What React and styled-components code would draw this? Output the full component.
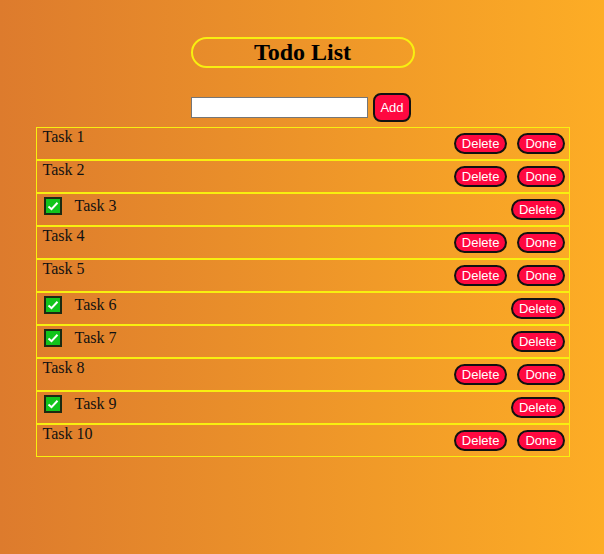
import React, { useState } from "react";
import styled, { createGlobalStyle } from "styled-components";

const GlobalStyle = createGlobalStyle`
  html, body {
    margin: 0;
    padding: 0;
  }
  body {
    min-height: 100vh;
    background: linear-gradient(to right, #dd7b2d, #fdad25);
    font-family: "Liberation Serif", "Times New Roman", serif;
  }
`;

const Page = styled.div`
  display: flex;
  flex-direction: column;
  align-items: center;
  padding-top: 37px;
  min-height: 100vh;
  box-sizing: border-box;
`;

const Title = styled.h1`
  margin: 0 0 25px 1px;
  width: 224px;
  box-sizing: border-box;
  border: 2px solid #f8ef10;
  border-radius: 16px;
  font-size: 24px;
  line-height: 27px;
  text-align: center;
  color: #000;
`;

const Form = styled.form`
  display: flex;
  align-items: center;
  gap: 5px;
  margin-bottom: 5px;
  margin-right: 2px;
`;

const Input = styled.input`
  width: 177px;
  height: 21px;
  box-sizing: border-box;
  border: 1px solid #767676;
  background: #fff;
  padding: 1px 2px;
`;

const RedButton = styled.button`
  background: #ff0840;
  color: #fff;
  border: 2px solid #111;
  font-family: "Liberation Sans", Arial, sans-serif;
  font-size: 13px;
  line-height: 15px;
  cursor: pointer;
  padding: ${(p) => (p.$big ? "5px 5px" : "1px 6px")};
  border-radius: ${(p) => (p.$big ? "8px" : "12px")};
`;

const List = styled.ul`
  list-style: none;
  margin: 0 0 0 1px;
  padding: 0;
  width: 534px;
`;

const Row = styled.li`
  display: flex;
  align-items: center;
  justify-content: space-between;
  height: 33px;
  box-sizing: border-box;
  border: 1px solid #f8ef10;
  padding: 0 4px 0 6px;
  font-size: 16px;
  color: #111;
`;

const Label = styled.div`
  align-self: flex-start;
  display: flex;
  align-items: center;
  gap: 13px;
  line-height: 18px;
  margin-top: ${(p) => (p.$done ? "3px" : "0")};
  margin-left: ${(p) => (p.$done ? "1px" : "0")};
`;

const Check = styled.span`
  display: inline-flex;
  align-items: center;
  justify-content: center;
  width: 18px;
  height: 18px;
  box-sizing: border-box;
  background: #12c41b;
  border: 2px solid #1c2a12;
`;

const Actions = styled.div`
  display: flex;
  gap: 10px;
  margin-bottom: 1px;
`;

const initial = [
  { id: 1, text: "Task 1", done: false },
  { id: 2, text: "Task 2", done: false },
  { id: 3, text: "Task 3", done: true },
  { id: 4, text: "Task 4", done: false },
  { id: 5, text: "Task 5", done: false },
  { id: 6, text: "Task 6", done: true },
  { id: 7, text: "Task 7", done: true },
  { id: 8, text: "Task 8", done: false },
  { id: 9, text: "Task 9", done: true },
  { id: 10, text: "Task 10", done: false },
];

function App() {
  const [todos, setTodos] = useState(initial);
  const [value, setValue] = useState("");

  const addTodo = (e) => {
    e.preventDefault();
    if (!value.trim()) return;
    setTodos([...todos, { id: Date.now(), text: value, done: false }]);
    setValue("");
  };

  return (
    <Page>
      <GlobalStyle />
      <Title>Todo List</Title>
      <Form onSubmit={addTodo}>
        <Input value={value} onChange={(e) => setValue(e.target.value)} />
        <RedButton $big type="submit">
          Add
        </RedButton>
      </Form>
      <List>
        {todos.map((todo) => (
          <Row key={todo.id}>
            <Label $done={todo.done}>
              {todo.done && (
                <Check>
                  <svg width="12" height="10" viewBox="0 0 12 10">
                    <path
                      d="M1.5 5.5 L4.5 8.2 L10.5 1.8"
                      fill="none"
                      stroke="#fff"
                      strokeWidth="2"
                    />
                  </svg>
                </Check>
              )}
              <span>{todo.text}</span>
            </Label>
            <Actions>
              <RedButton
                onClick={() => setTodos(todos.filter((t) => t.id !== todo.id))}
              >
                Delete
              </RedButton>
              {!todo.done && (
                <RedButton
                  onClick={() =>
                    setTodos(
                      todos.map((t) =>
                        t.id === todo.id ? { ...t, done: true } : t
                      )
                    )
                  }
                >
                  Done
                </RedButton>
              )}
            </Actions>
          </Row>
        ))}
      </List>
    </Page>
  );
}

export default App;
